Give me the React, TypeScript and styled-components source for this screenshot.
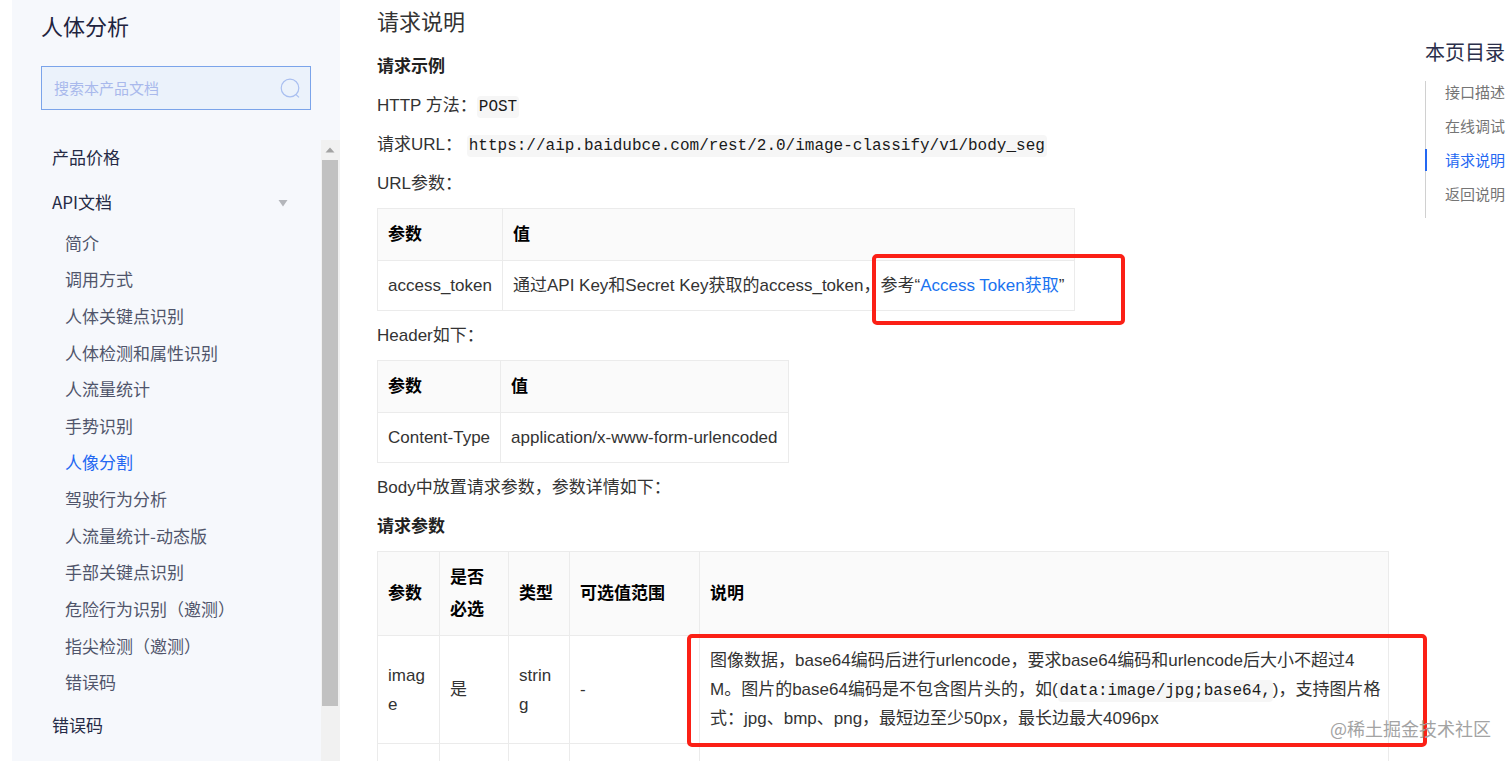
import React from "react";
import styled, { createGlobalStyle } from "styled-components";

const GlobalStyle = createGlobalStyle`
  *, *::before, *::after { box-sizing: border-box; }
  html, body { margin: 0; padding: 0; background: #fff; }
  body {
    color: #333;
    font-family: "Liberation Sans", "Noto Sans CJK SC", sans-serif;
    font-size: 17px;
    line-height: 29px;
  }
  h1, h2, h3, p, ul { margin: 0; padding: 0; }
  ul { list-style: none; }
  a { text-decoration: none; color: inherit; }
`;

const Page = styled.div`
  position: relative;
  display: flex;
  height: 100vh;
  padding-left: 12px;
  overflow: hidden;
`;

const Sidebar = styled.aside`
  display: flex;
  flex-direction: column;
  flex: 0 0 328px;
  background: #f6f8fc;
  font-family: "Noto Sans CJK SC", sans-serif;
`;

const SidebarTitle = styled.h1`
  margin: 10px 29px 0;
  color: #1f2440;
  font-size: 22px;
  font-weight: 400;
  line-height: 30px;
`;

const SearchBox = styled.form`
  display: flex;
  align-items: center;
  height: 44px;
  margin: 26px 29px 30px;
  padding: 0 10px 0 12px;
  border: 1px solid #7ba4ea;
  background: #ebf2fb;
`;

const SearchInput = styled.input`
  flex: 1;
  min-width: 0;
  padding: 0 0 2px;
  border: 0;
  outline: 0;
  background: transparent;
  color: #333;
  font: inherit;
  font-size: 15px;
  &::placeholder { color: #a9b9ec; opacity: 1; }
`;

const SearchButton = styled.button`
  display: flex;
  padding: 0;
  border: 0;
  background: none;
  color: #a9bff0;
`;

const NavArea = styled.div`
  display: flex;
  flex: 1;
  min-height: 0;
`;

const Nav = styled.nav`
  flex: 1;
  padding-left: 40px;
  overflow: hidden;
`;

const NavGroup = styled.a`
  display: flex;
  align-items: center;
  justify-content: space-between;
  padding-right: 33px;
  height: 46px;
  color: #252a45;
  &:first-child { height: 38px; padding-bottom: 6px; }
`;

const SubList = styled.ul`
  display: grid;
  grid-auto-rows: 1fr;
  align-items: center;
  height: 476px;
  margin-bottom: 1px;
  padding-left: 13px;
`;

const SubLink = styled.a<{ $active?: boolean }>`
  color: ${(p) => (p.$active ? "#2468f2" : "#50556b")};
`;

const ScrollTrack = styled.div`
  display: flex;
  flex-direction: column;
  width: 19px;
  padding: 0 2px 0 1px;
  background: #f1f1f1;
`;

const ScrollArrow = styled.button`
  display: flex;
  align-items: center;
  justify-content: center;
  height: 20px;
  padding: 0;
  border: 0;
  background: none;
  color: #a3a3a3;
`;

const ScrollThumb = styled.div`
  height: 88%;
  background: #c1c1c1;
`;

const Main = styled.main`
  display: flex;
  flex: 1;
  flex-direction: column;
  align-items: flex-start;
  gap: 10px;
  min-width: 0;
  padding: 8px 36px 0 37px;
`;

const SectionTitle = styled.h2`
  margin-bottom: 4px;
  font-size: 22px;
  font-weight: 400;
  line-height: 30px;
`;

const SubTitle = styled.h3`
  color: #222;
  font-size: 17px;
  font-weight: 700;
  line-height: 29px;
`;

const Code = styled.code`
  padding: 2px;
  border-radius: 4px;
  background: #f6f6f6;
  color: #1a1a1a;
  font-family: "Liberation Mono", monospace;
  font-size: 16px;
  line-height: 20px;
`;

const TableFrame = styled.div<{ $full?: boolean }>`
  position: relative;
  width: ${(p) => (p.$full ? "100%" : "auto")};
`;

const Table = styled.table<{ $full?: boolean }>`
  width: ${(p) => (p.$full ? "100%" : "auto")};
  table-layout: ${(p) => (p.$full ? "fixed" : "auto")};
  border-collapse: collapse;
  word-break: ${(p) => (p.$full ? "break-all" : "normal")};
`;

const Th = styled.th`
  padding: 10px 10px 9px;
  border: 1px solid #ebebeb;
  background: #fafafa;
  color: #000;
  font-weight: 700;
  line-height: 32px;
  text-align: left;
`;

const Td = styled.td<{ $wide?: boolean }>`
  padding: 10px ${(p) => (p.$wide ? 6 : 10)}px 10px 10px;
  border: 1px solid #ebebeb;
`;

const Col = styled.col<{ $w?: number }>`
  width: ${(p) => (p.$w ? `${p.$w}px` : "auto")};
`;

const TextLink = styled.a`
  color: #1a73f0;
`;

const Highlight = styled.div<{ $top: number; $left: number; $right: number; $height: number }>`
  position: absolute;
  top: ${(p) => p.$top}px;
  left: ${(p) => p.$left}px;
  right: ${(p) => p.$right}px;
  height: ${(p) => p.$height}px;
  border: 4px solid #fb2016;
  border-radius: 5px;
  pointer-events: none;
`;

const Toc = styled.aside`
  flex: 0 0 87px;
  padding-top: 37px;
  white-space: nowrap;
  font-family: "Noto Sans CJK SC", sans-serif;
`;

const TocTitle = styled.h2`
  color: #2b2f4a;
  font-size: 20px;
  font-weight: 400;
  line-height: 30px;
`;

const TocList = styled.ul`
  display: flex;
  flex-direction: column;
  gap: 12px;
  margin-top: 14px;
  padding-bottom: 13px;
  border-left: 1px solid #d0d0d0;
`;

const TocLink = styled.a<{ $active?: boolean }>`
  display: block;
  margin-left: -1px;
  padding-left: 18px;
  border-left: 2px solid ${(p) => (p.$active ? "#2468f2" : "transparent")};
  color: ${(p) => (p.$active ? "#2468f2" : "#757575")};
  font-size: 15px;
  line-height: 22px;
`;

const Watermark = styled.div`
  position: absolute;
  right: 21px;
  bottom: 18px;
  color: #a3a3a3;
  font-family: "Noto Sans CJK SC", sans-serif;
  font-size: 18px;
  line-height: 30px;
`;

const apiDocs = [
  "简介",
  "调用方式",
  "人体关键点识别",
  "人体检测和属性识别",
  "人流量统计",
  "手势识别",
  "人像分割",
  "驾驶行为分析",
  "人流量统计-动态版",
  "手部关键点识别",
  "危险行为识别（邀测）",
  "指尖检测（邀测）",
  "错误码",
];

const sections = ["接口描述", "在线调试", "请求说明", "返回说明"];

export default function App() {
  return (
    <>
      <GlobalStyle />
      <Page>
        <Sidebar>
          <SidebarTitle>人体分析</SidebarTitle>
          <SearchBox role="search">
            <SearchInput type="text" aria-label="搜索本产品文档" placeholder="搜索本产品文档" />
            <SearchButton type="button" aria-label="搜索">
              <svg width="20" height="20" viewBox="0 0 20 20" fill="none" stroke="currentColor" strokeWidth="1.2">
                <circle cx="10" cy="10" r="8.8" />
                <path d="M15.8 16.4 L19 19.4" />
              </svg>
            </SearchButton>
          </SearchBox>
          <NavArea>
            <Nav>
              <NavGroup href="#price">产品价格</NavGroup>
              <NavGroup href="#api">
                API文档
                <svg width="10" height="12" viewBox="0 0 10 12">
                  <path d="M0.5 5 H9.5 L5 11.5 Z" fill="#b4b6bb" />
                </svg>
              </NavGroup>
              <SubList>
                {apiDocs.map((name) => (
                  <li key={name}>
                    <SubLink href="#doc" $active={name === "人像分割"}>
                      {name}
                    </SubLink>
                  </li>
                ))}
              </SubList>
              <NavGroup href="#errors">错误码</NavGroup>
            </Nav>
            <ScrollTrack>
              <ScrollArrow type="button" aria-label="向上滚动">
                <svg width="10" height="6" viewBox="0 0 10 6">
                  <path d="M0.5 5.5 H9.5 L5 0.5 Z" fill="currentColor" />
                </svg>
              </ScrollArrow>
              <ScrollThumb />
            </ScrollTrack>
          </NavArea>
        </Sidebar>

        <Main>
          <SectionTitle>请求说明</SectionTitle>
          <SubTitle>请求示例</SubTitle>
          <p>
            HTTP 方法：<Code>POST</Code>
          </p>
          <p>
            请求URL： <Code>https://aip.baidubce.com/rest/2.0/image-classify/v1/body_seg</Code>
          </p>
          <p>URL参数：</p>
          <TableFrame>
            <Table>
              <thead>
                <tr>
                  <Th>参数</Th>
                  <Th>值</Th>
                </tr>
              </thead>
              <tbody>
                <tr>
                  <Td>access_token</Td>
                  <Td>
                    通过API Key和Secret Key获取的access_token，参考“
                    <TextLink href="#token">Access Token获取</TextLink>”
                  </Td>
                </tr>
              </tbody>
            </Table>
            <Highlight $top={46} $left={495} $right={-50} $height={71} />
          </TableFrame>
          <p>Header如下：</p>
          <TableFrame>
            <Table>
              <thead>
                <tr>
                  <Th>参数</Th>
                  <Th>值</Th>
                </tr>
              </thead>
              <tbody>
                <tr>
                  <Td>Content-Type</Td>
                  <Td>application/x-www-form-urlencoded</Td>
                </tr>
              </tbody>
            </Table>
          </TableFrame>
          <p>Body中放置请求参数，参数详情如下：</p>
          <SubTitle>请求参数</SubTitle>
          <TableFrame $full>
            <Table $full>
              <colgroup>
                <Col $w={62} />
                <Col $w={69} />
                <Col $w={61} />
                <Col $w={130} />
                <Col />
              </colgroup>
              <thead>
                <tr>
                  <Th>参数</Th>
                  <Th>是否必选</Th>
                  <Th>类型</Th>
                  <Th>可选值范围</Th>
                  <Th>说明</Th>
                </tr>
              </thead>
              <tbody>
                <tr>
                  <Td>image</Td>
                  <Td>是</Td>
                  <Td>string</Td>
                  <Td>-</Td>
                  <Td $wide>
                    图像数据，base64编码后进行urlencode，要求base64编码和urlencode后大小不超过4M。图片的base64编码是不包含图片头的，如(
                    <Code>data:image/jpg;base64,</Code>)，支持图片格式：jpg、bmp、png，最短边至少50px，最长边最大4096px
                  </Td>
                </tr>
                <tr>
                  <Td />
                  <Td />
                  <Td />
                  <Td />
                  <Td>&nbsp;</Td>
                </tr>
              </tbody>
            </Table>
            <Highlight $top={83} $left={310} $right={-38} $height={113} />
          </TableFrame>
        </Main>

        <Toc>
          <TocTitle>本页目录</TocTitle>
          <TocList>
            {sections.map((name) => (
              <li key={name}>
                <TocLink href="#section" $active={name === "请求说明"}>
                  {name}
                </TocLink>
              </li>
            ))}
          </TocList>
        </Toc>
        <Watermark>@稀土掘金技术社区</Watermark>
      </Page>
    </>
  );
}
